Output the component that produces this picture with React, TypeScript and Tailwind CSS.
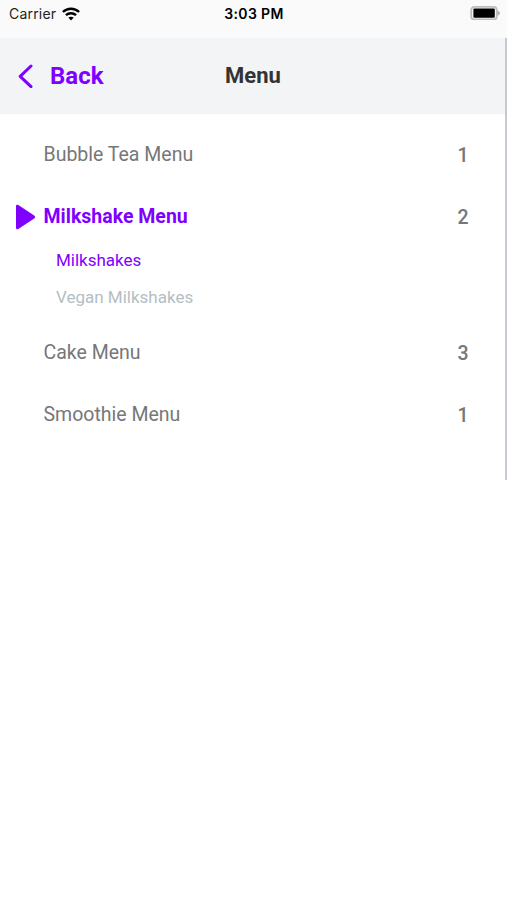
const menus = [
  { name: "Bubble Tea Menu", count: 1 },
  { name: "Milkshake Menu", count: 2, active: true, sections: ["Milkshakes", "Vegan Milkshakes"] },
  { name: "Cake Menu", count: 3 },
  { name: "Smoothie Menu", count: 1 },
];

function StatusBar() {
  return (
    <div className="grid h-[38px] grid-cols-3 items-start bg-[#fafafa] pt-[5px] pr-[6px] pl-[9px] font-[Inter,sans-serif] text-[14px] leading-[18px] text-black">
      <div className="flex items-center gap-[6px]">
        <span className="tracking-[0.2px] text-[#222]">Carrier</span>
        <svg className="h-[14px] w-[18px]" viewBox="0 0 18 14" fill="none" stroke="#000" strokeWidth="2.4">
          <path d="M.9 5C5.5.6 12.5.6 17.1 5" />
          <path d="M3.9 8.2c2.9-2.7 7.3-2.7 10.2 0" />
          <path d="M6.3 10.6c1.6-1.3 3.8-1.3 5.4 0L9 13.5z" fill="#000" stroke="none" />
        </svg>
      </div>
      <span className="-ml-[2px] text-center font-semibold tracking-[0.35px]">3:03 PM</span>
      <svg className="mt-px h-[14px] w-[31px] justify-self-end" viewBox="0 0 31 14" fill="none">
        <rect x="1.2" y="0.9" width="25.6" height="12.6" rx="3.2" stroke="#bdbdbd" strokeWidth="1.8" />
        <rect x="3.4" y="2.4" width="21.4" height="9.4" rx="1" fill="#000" />
        <path d="M27.5 4.4v5.4c3.2-1.4 3.2-4 0-5.4z" fill="#b0b0b0" />
      </svg>
    </div>
  );
}

function Header() {
  return (
    <header className="grid h-[76px] grid-cols-3 items-center bg-[#f2f4f5] px-[18px]">
      <button className="flex items-center gap-4 text-[24px] font-bold text-[#8000ff]">
        <svg className="h-6 w-4" viewBox="0 0 16 24" fill="none" stroke="currentColor" strokeWidth="3" strokeLinecap="round" strokeLinejoin="round">
          <path d="M13 2 2.2 12.3 13 22.6" />
        </svg>
        Back
      </button>
      <h1 className="-mt-[2px] pl-px text-center text-[22px] font-bold text-[#333]">Menu</h1>
    </header>
  );
}

export default function App() {
  return (
    <div className="h-[900px] w-[507px] overflow-hidden bg-white font-[Roboto,sans-serif]">
      <StatusBar />
      <div className="h-[442px] border-r-2 border-[#c4c9d3]">
        <Header />
        <nav className="pt-[9px]">
          {menus.map((menu) => (
            <div key={menu.name}>
              <div className="flex h-[62px] items-center pr-[36.5px] pl-4 text-[19.5px] text-[#777]">
                <div className="w-[27.5px] pt-[2px]">
                  {menu.active && (
                    <svg className="h-[26px] w-5" viewBox="0 0 20 26" fill="#8000ff">
                      <path d="M0 2.2C0 .8 1.2.3 2.3 1l15.9 10.6c1.2.8 1.2 2 0 2.8L2.3 25C1.2 25.7 0 25.2 0 23.8z" />
                    </svg>
                  )}
                </div>
                <span className={menu.active ? "flex-1 pt-[2px] font-bold text-[#8000ff]" : "flex-1 pt-px"}>{menu.name}</span>
                <span className="pt-[3px] font-medium">{menu.count}</span>
              </div>
              {menu.sections && (
                <ul className="-mt-[5px] mb-[5px] pl-14 text-[17px] leading-[37px]">
                  {menu.sections.map((section, i) => (
                    <li key={section} className={i === 0 ? "text-[#8000ff]" : "text-[#b3bec4]"}>
                      {section}
                    </li>
                  ))}
                </ul>
              )}
            </div>
          ))}
        </nav>
      </div>
    </div>
  );
}
